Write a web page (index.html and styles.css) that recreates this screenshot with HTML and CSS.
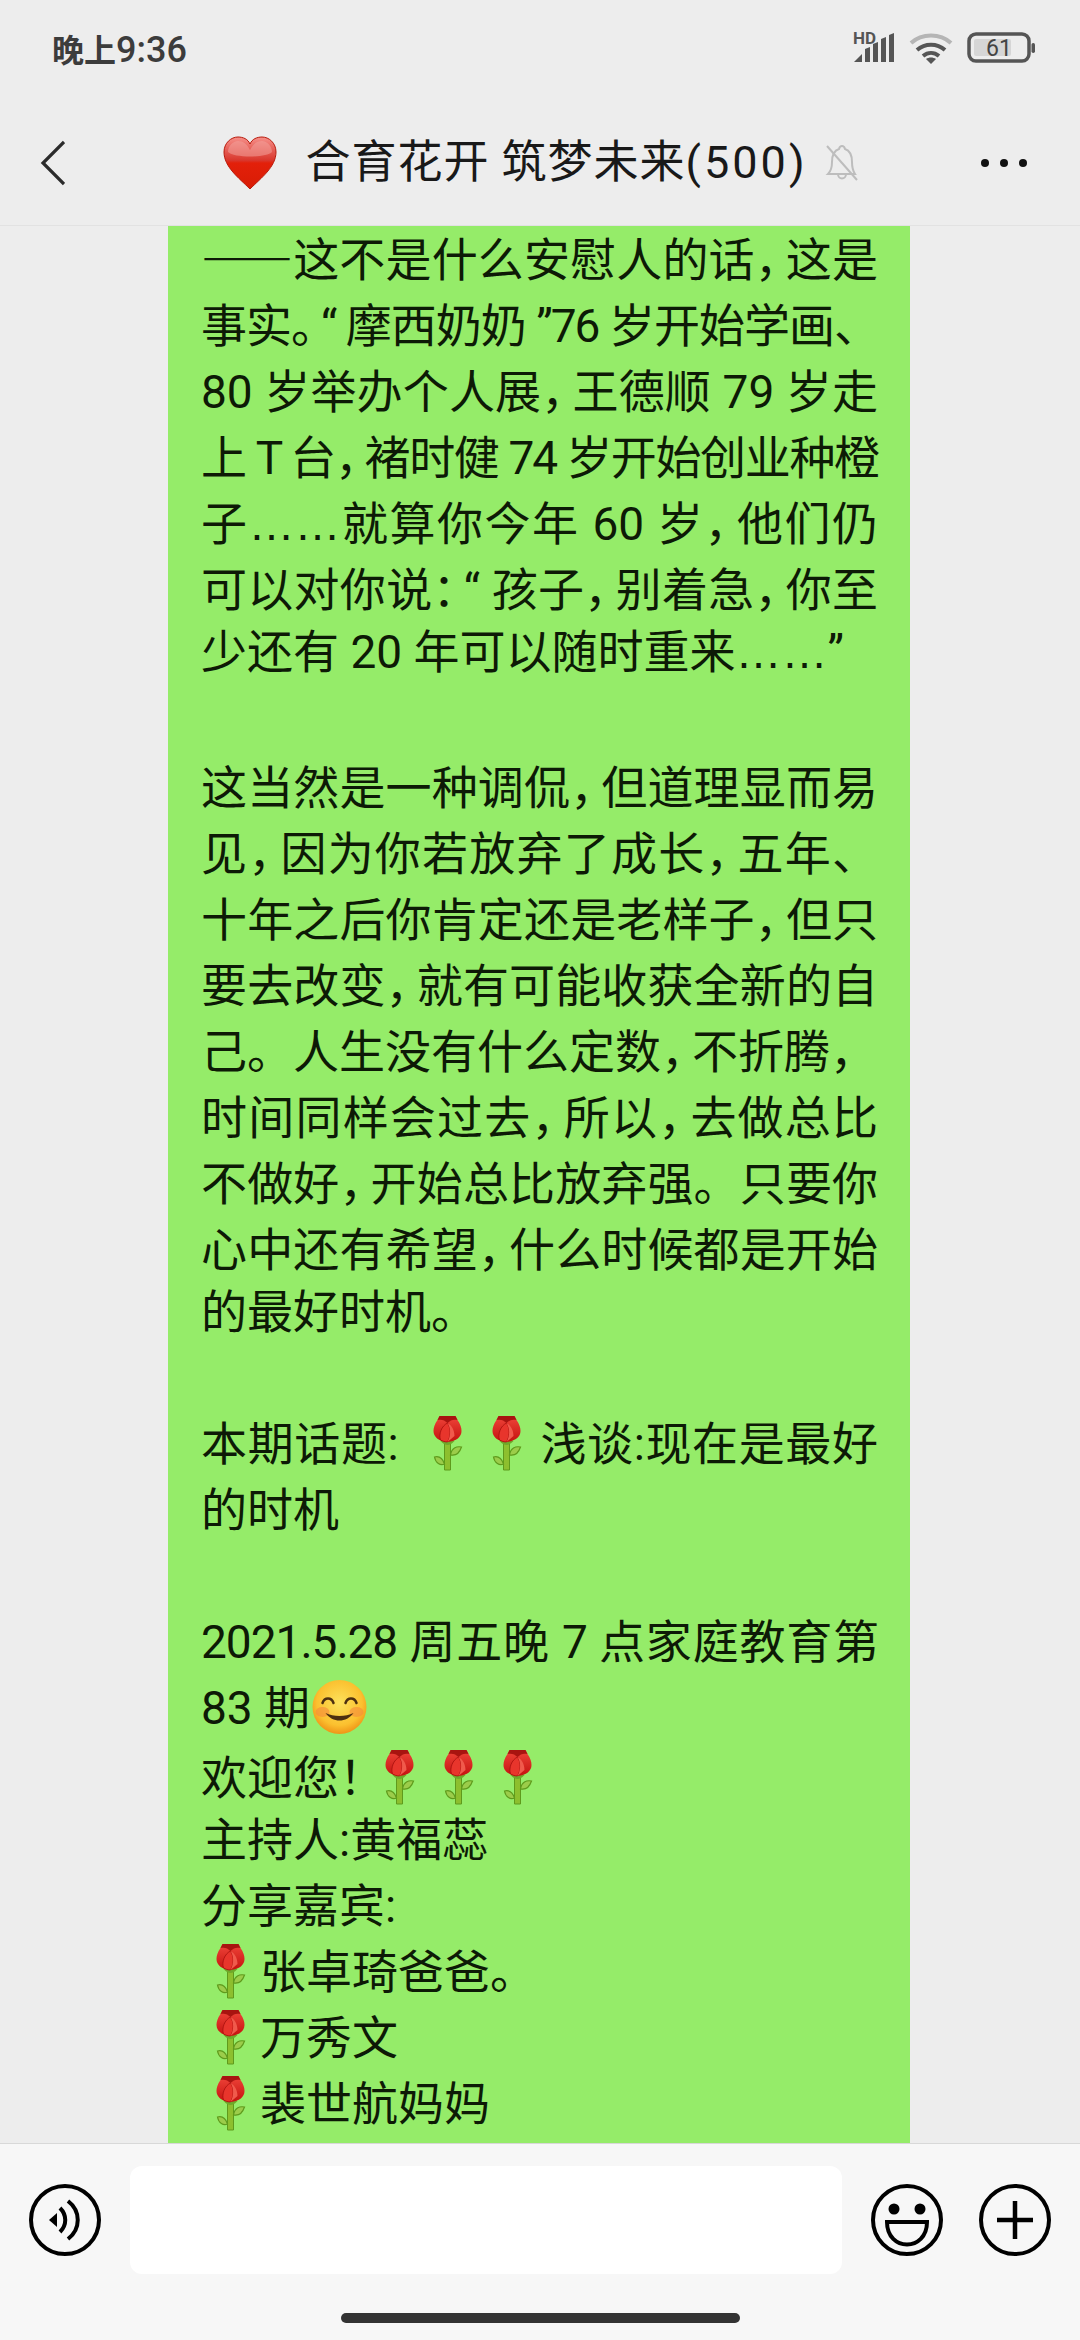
FILE: index.html
```html
<!DOCTYPE html>
<html lang="zh-CN">
<head>
    <meta charset="UTF-8">
    <title>合育花开 筑梦未来</title>
    <link rel="stylesheet" href="styles.css">
</head>
<body>
<svg class="defs" width="0" height="0">
    <defs>
        <linearGradient id="petal" x1="0" y1="0" x2="0" y2="1">
            <stop offset="0" stop-color="#f0453a"/>
            <stop offset="1" stop-color="#c4120f"/>
        </linearGradient>
        <linearGradient id="heartFill" x1="0" y1="0" x2="0" y2="1">
            <stop offset="0" stop-color="#f6908a"/>
            <stop offset="0.45" stop-color="#d9362c"/>
            <stop offset="0.5" stop-color="#e3200a"/>
            <stop offset="1" stop-color="#d81c05"/>
        </linearGradient>
        <radialGradient id="faceFill" cx="0.5" cy="0.42" r="0.6">
            <stop offset="0" stop-color="#fde25c"/>
            <stop offset="0.7" stop-color="#fbc02f"/>
            <stop offset="1" stop-color="#ee8f14"/>
        </radialGradient>
        <symbol id="rose" viewBox="0 0 58 58">
            <path d="M26 26h6v30h-6z" fill="#8dbf2e" stroke="#5f9a1c" stroke-width="1"/>
            <path d="M26 50C24 44 20 42 16 43c1 6 6 9 10 7z" fill="#9ccc4a" stroke="#5f9a1c" stroke-width="1.2"/>
            <path d="M32 41c5 1 9-2 11-8-5-1-10 1-11 8z" fill="#9ccc4a" stroke="#5f9a1c" stroke-width="1.2"/>
            <path d="M22 27c3 3 5 4 7 4s4-1 7-4l-7-3z" fill="#6fa82a"/>
            <path d="M21 2h16l2 4c3 4 4 8 4 11 0 6-5 10-14 11-9-1-14-5-14-11 0-3 1-7 4-11z" fill="url(#petal)"/>
            <path d="M21 2h16l2 4c-4-1-7 0-10 3-3-3-6-4-10-3z" fill="#a81410"/>
            <path d="M29 9c-6 3-9 11-7 17 2 1 4 2 7 2 3-5 4-13 0-19z" fill="#e8352c" stroke="#a50f0c" stroke-width="0.8"/>
            <path d="M29 9c4 2 7 7 7 13l-7 6c3-5 4-13 0-19z" fill="#f05a4c"/>
        </symbol>
    </defs>
</svg>

<div class="phone">
    <div class="status">
        <span class="clock">晚上<span class="clock-num">9:36</span></span>
        <div class="status-icons">
            <svg width="42" height="36" viewBox="0 -4 42 36">
                <text x="0" y="12" class="hd">HD</text>
                <path d="M1 30l8-8v8z" fill="#555"/>
                <path d="M12 17l5-2v15h-5zM20 12l5-2v20h-5zM28 7l5-2v25h-5zM36 3l5-2v29h-5z" fill="#555"/>
            </svg>
            <svg width="44" height="36" viewBox="0 -4 44 36">
                <path d="M2 11C13 1 31 1 42 11" fill="none" stroke="#b5b5b5" stroke-width="4"/>
                <path d="M8 18c8-7 20-7 28 0M14 24c5-4 11-4 16 0" fill="none" stroke="#555" stroke-width="4"/>
                <path d="M22 32l-5-5c3-2 7-2 10 0z" fill="#555"/>
            </svg>
            <svg width="68" height="36" viewBox="0 -4 68 36">
                <rect x="2" y="2" width="60" height="27" rx="7" fill="none" stroke="#555" stroke-width="3.5"/>
                <rect x="7" y="7" width="37" height="17" rx="2" fill="#d6d6d6"/>
                <rect x="64.500" y="11" width="3.500" height="10" rx="1.700" fill="#555"/>
                <text x="32" y="24" text-anchor="middle" class="batt-num">61</text>
            </svg>
        </div>
    </div>

    <div class="nav">
        <svg width="25" height="46" viewBox="0 0 25 46">
            <path d="M24 2L3 23l21 21" fill="none" stroke="#2b2b2b" stroke-width="3.200"/>
        </svg>
        <div class="nav-title">
            <svg width="54" height="54" viewBox="0 0 54 54">
                <path d="M27 53C16 42 1 31 1 16 1 7 8 1 15 1c5 0 10 2 12 7 2-5 7-7 12-7 7 0 14 6 14 15 0 15-15 26-26 37z" fill="url(#heartFill)" stroke="#b81b0c" stroke-width="1"/>
                <path d="M5 16c0-6 5-11 10-11 5 0 9 3 12 9 3-6 7-9 12-9 5 0 10 5 10 11-6 6-38 6-44 0z" fill="#f3a09a" opacity="0.55"/>
            </svg>
            <span class="title-text">合育花开 筑梦未来<span class="title-num">(500)</span></span>
            <svg class="ic-mute" width="34" height="38" viewBox="0 0 34 38">
                <path d="M15 5c1-4 5-4 6 0 6 2 7 7 7 13 0 6 1 9 3 12H4c3-3 4-6 4-12 0-6 1-11 7-13zM14 30c0 6 8 6 8 0" fill="none" stroke="#bdbdbd" stroke-width="2"/>
                <path d="M3 2l30 34" stroke="#bdbdbd" stroke-width="2"/>
            </svg>
        </div>
        <div class="more"><i></i><i></i><i></i></div>
    </div>

    <div class="chat">
        <div class="bubble">
            <div class="ln fit first"><span class="dash">——</span>这不是什么安慰人的话<span class="p">，</span>这是</div>
            <div class="ln fit tighter">事实<span class="p">。</span>“ 摩西奶奶 ”76 岁开始学画、</div>
            <div class="ln fit">80 岁举办个人展<span class="p">，</span>王德顺 79 岁走</div>
            <div class="ln fit tighter">上 T 台<span class="p">，</span>褚时健 74 岁开始创业种橙</div>
            <div class="ln fit">子<span class="dots">……</span>就算你今年 60 岁<span class="p">，</span>他们仍</div>
            <div class="ln fit">可以对你说<span class="p">：</span>“ 孩子<span class="p">，</span>别着急<span class="p">，</span>你至</div>
            <div class="ln">少还有 20 年可以随时重来<span class="dots">……</span>”</div>
            <div class="ln">&nbsp;</div>
            <div class="ln fit">这当然是一种调侃<span class="p">，</span>但道理显而易</div>
            <div class="ln fit">见<span class="p">，</span>因为你若放弃了成长<span class="p">，</span>五年、</div>
            <div class="ln fit">十年之后你肯定还是老样子<span class="p">，</span>但只</div>
            <div class="ln fit">要去改变<span class="p">，</span>就有可能收获全新的自</div>
            <div class="ln">己。人生没有什么定数<span class="p">，</span>不折腾<span class="p">，</span></div>
            <div class="ln fit">时间同样会过去<span class="p">，</span>所以<span class="p">，</span>去做总比</div>
            <div class="ln fit">不做好<span class="p">，</span>开始总比放弃强。只要你</div>
            <div class="ln fit">心中还有希望<span class="p">，</span>什么时候都是开始</div>
            <div class="ln">的最好时机。</div>
            <div class="ln">&nbsp;</div>
            <div class="ln fit">本期话题: <svg class="emo rose-a"><use href="#rose"/></svg><svg class="emo rose-b"><use href="#rose"/></svg>浅谈:现在是最好</div>
            <div class="ln">的时机</div>
            <div class="ln">&nbsp;</div>
            <div class="ln fit tight">2021.5.28 周五晚 7 点家庭教育第</div>
            <div class="ln">83 期<svg class="emo" viewBox="0 0 58 58">
                <circle cx="29" cy="29" r="27" fill="url(#faceFill)"/>
                <ellipse cx="12" cy="34" rx="7" ry="5" fill="#f58a3c" opacity="0.6"/>
                <ellipse cx="46" cy="34" rx="7" ry="5" fill="#f58a3c" opacity="0.6"/>
                <path d="M12 25c2-6 9-6 11 0M35 25c2-6 9-6 11 0" fill="none" stroke="#4d3010" stroke-width="2.500" stroke-linecap="round"/>
                <path d="M15 35c7 10 21 10 28 0-8 4-20 4-28 0z" fill="#4d3010"/>
            </svg></div>
            <div class="ln">欢迎您<span class="p">！</span><svg class="emo"><use href="#rose"/></svg><svg class="emo"><use href="#rose"/></svg><svg class="emo"><use href="#rose"/></svg></div>
            <div class="ln">主持人:黄福蕊</div>
            <div class="ln">分享嘉宾:</div>
            <div class="ln"><svg class="emo"><use href="#rose"/></svg>张卓琦爸爸。</div>
            <div class="ln"><svg class="emo"><use href="#rose"/></svg>万秀文</div>
            <div class="ln"><svg class="emo"><use href="#rose"/></svg>裴世航妈妈</div>
        </div>
    </div>

    <div class="bar">
        <div class="bar-row">
            <svg width="72" height="74" viewBox="0 0 72 74">
                <circle cx="36" cy="37" r="34" fill="none" stroke="#000" stroke-width="4"/>
                <path d="M20 37l8-7v14z" fill="#000"/>
                <path d="M31 25c7 7 7 17 0 24M39 18c13 10 13 28 0 38" fill="none" stroke="#000" stroke-width="4"/>
            </svg>
            <div class="input-box"></div>
            <svg width="72" height="74" viewBox="0 0 72 74">
                <circle cx="36" cy="37" r="34" fill="none" stroke="#000" stroke-width="4"/>
                <circle cx="23" cy="26" r="5.500" fill="#000"/>
                <circle cx="49" cy="26" r="5.500" fill="#000"/>
                <path d="M16 39h40c0 30-40 30-40 0z" fill="none" stroke="#000" stroke-width="4"/>
            </svg>
            <svg class="ic-plus" width="72" height="74" viewBox="0 0 72 74">
                <circle cx="36" cy="37" r="34" fill="none" stroke="#000" stroke-width="4"/>
                <path d="M36 18v38M18 37h36" stroke="#000" stroke-width="4.500"/>
            </svg>
        </div>
        <div class="home"></div>
    </div>
</div>
</body>
</html>
```
FILE: styles.css
```css
* {
    margin: 0;
    padding: 0;
    box-sizing: border-box;
}

body {
    background: #ededed;
    font-family: Roboto, "Noto Sans CJK SC", sans-serif;
}

.defs {
    position: absolute;
}

.phone {
    width: 1080px;
    height: 2340px;
    display: flex;
    flex-direction: column;
    overflow: hidden;
}

.status {
    height: 100px;
    padding: 28px 45px 0 52px;
    display: flex;
    justify-content: space-between;
    align-items: flex-start;
}

.clock {
    padding-top: 4px;
    font-size: 32px;
    line-height: 36px;
    font-weight: 700;
    color: #3c3c3c;
}

.clock-num {
    font-size: 36px;
    font-weight: 500;
}

.status-icons {
    display: flex;
    gap: 14px;
}

.hd {
    font-size: 17px;
    font-weight: 700;
    fill: #555;
}

.batt-num {
    font-size: 23px;
    fill: #444;
}

.nav {
    height: 126px;
    padding: 0 53px 0 40px;
    display: grid;
    grid-template-columns: 1fr auto 1fr;
    align-items: center;
    border-bottom: 1px solid #e2e2e2;
}

.nav-title {
    margin-left: 14px;
    display: flex;
    align-items: center;
}

.title-text {
    margin-left: 28px;
    font-size: 45px;
    letter-spacing: 1px;
    line-height: 58px;
    color: #191919;
    white-space: pre;
}

.title-num {
    letter-spacing: 3px;
}

.ic-mute {
    margin-left: 16px;
}

.more {
    justify-self: end;
    display: flex;
    gap: 11px;
}

.more i {
    width: 8px;
    height: 8px;
    border-radius: 50%;
    background: #111;
}

.chat {
    flex: 1;
    display: flex;
    background: #ededed;
}

.bubble {
    width: 742px;
    margin-left: 168px;
    padding: 0 32px 0 33px;
    background: #95ec69;
    color: #0d1a06;
    font-size: 46px;
}

.ln {
    height: 66px;
    line-height: 66px;
    white-space: nowrap;
}

/* top line sits a little higher: the list is scrolled */
.first {
    height: 63px;
    line-height: 60px;
}

.fit {
    white-space: normal;
    text-align: justify;
    text-align-last: justify;
}

.tight {
    letter-spacing: -1px;
}

.tighter {
    letter-spacing: -2px;
}

/* punctuation set narrower than the full em box */
.p {
    padding-right: 8px;
    font-family: "Noto Sans CJK SC", sans-serif;
    font-feature-settings: "halt";
}

.dash {
    font-family: "Noto Sans CJK SC", sans-serif;
    font-weight: 700;
}

.dots {
    font-family: "Liberation Sans", sans-serif;
}

.emo {
    width: 59px;
    height: 58px;
    vertical-align: -12px;
}

.rose-a {
    margin-left: 7px;
}

.rose-b {
    margin-right: 4px;
}

.bar {
    height: 197px;
    background: #f7f7f7;
    border-top: 1px solid #d8d8d8;
    padding: 22px 29px 0;
}

.bar-row {
    display: flex;
    align-items: center;
    gap: 29px;
}

.input-box {
    flex: 1;
    height: 108px;
    background: #fff;
    border-radius: 12px;
}

.ic-plus {
    margin-left: 7px;
}

.home {
    width: 399px;
    height: 10px;
    margin: 39px auto 0;
    border-radius: 5px;
    background: #333;
}
```
